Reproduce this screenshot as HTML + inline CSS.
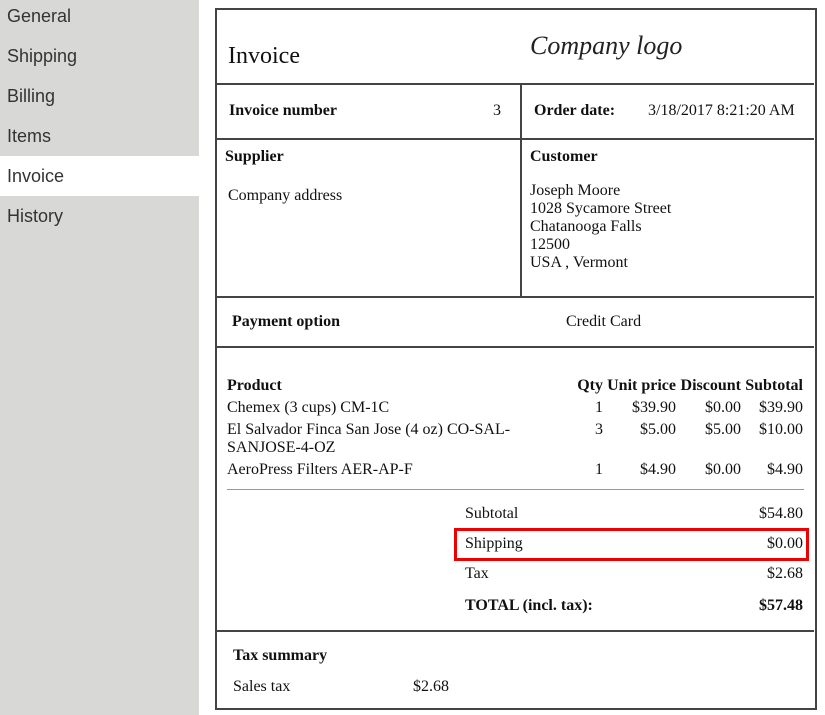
<!DOCTYPE html>
<html><head><style>
body{margin:0;width:825px;height:715px;background:#fff;position:relative;overflow:hidden;font-family:"Liberation Serif",serif;font-size:16px;color:#111}
.sb{position:absolute;left:0;top:0;width:199px;height:715px;background:#d8d9d7}
.nav{position:absolute;left:7px;font-family:"Liberation Sans",sans-serif;font-size:18px;color:#333}
.t{position:absolute;white-space:nowrap;line-height:18px}
.r{text-align:right}
.b{font-weight:bold}
.h{position:absolute;height:1px;background:#444}
</style></head><body>
<div class="sb"></div>
<div style="position:absolute;left:0;top:156px;width:199px;height:40px;background:#fff"></div>
<div class="nav" style="top:6px">General</div>
<div class="nav" style="top:46px">Shipping</div>
<div class="nav" style="top:86px">Billing</div>
<div class="nav" style="top:126px">Items</div>
<div class="nav" style="top:166px">Invoice</div>
<div class="nav" style="top:206px">History</div>

<div style="position:absolute;left:215px;top:8px;width:598px;height:698px;border:2px solid #444"></div>
<div class="h" style="left:216px;top:83px;width:598px;height:2px"></div>
<div class="h" style="left:216px;top:138px;width:598px;height:2px"></div>
<div class="h" style="left:216px;top:296px;width:598px;height:2px"></div>
<div class="h" style="left:216px;top:346px;width:598px;height:2px"></div>
<div class="h" style="left:216px;top:630px;width:598px;height:2px"></div>
<div style="position:absolute;left:520px;top:84px;width:2px;height:213px;background:#444"></div>
<div style="position:absolute;left:227px;top:489px;width:577px;height:1px;background:#999"></div>
<div style="position:absolute;left:454px;top:528px;width:349px;height:27px;border:3px solid #e00"></div>

<div class="t" style="left:228px;top:42px;font-size:24px;line-height:28px">Invoice</div>
<div class="t" style="left:530px;top:30px;font-size:26px;line-height:32px;font-style:italic;color:#222">Company logo</div>
<div class="t b" style="left:229px;top:102px">Invoice number</div>
<div class="t" style="left:493px;top:102px">3</div>
<div class="t b" style="left:534px;top:102px">Order date:</div>
<div class="t" style="left:648px;top:102px">3/18/2017 8:21:20 AM</div>
<div class="t b" style="left:225px;top:148px">Supplier</div>
<div class="t" style="left:228px;top:187px">Company address</div>
<div class="t b" style="left:530px;top:148px">Customer</div>
<div class="t" style="left:530px;top:182px">Joseph Moore<br>1028 Sycamore Street<br>Chatanooga Falls<br>12500<br>USA , Vermont</div>
<div class="t b" style="left:232px;top:313px">Payment option</div>
<div class="t" style="left:566px;top:313px">Credit Card</div>

<div class="t b" style="left:227px;top:377px">Product</div>
<div class="t b r" style="right:222px;top:377px">Qty</div>
<div class="t b r" style="right:149px;top:377px">Unit price</div>
<div class="t b r" style="right:84px;top:377px">Discount</div>
<div class="t b r" style="right:22px;top:377px">Subtotal</div>

<div class="t" style="left:227px;top:399px">Chemex (3 cups) CM-1C</div>
<div class="t r" style="right:222px;top:399px">1</div>
<div class="t r" style="right:149px;top:399px">$39.90</div>
<div class="t r" style="right:84px;top:399px">$0.00</div>
<div class="t r" style="right:22px;top:399px">$39.90</div>

<div class="t" style="left:227px;top:421px">El Salvador Finca San Jose (4 oz) CO-SAL-<br>SANJOSE-4-OZ</div>
<div class="t r" style="right:222px;top:421px">3</div>
<div class="t r" style="right:149px;top:421px">$5.00</div>
<div class="t r" style="right:84px;top:421px">$5.00</div>
<div class="t r" style="right:22px;top:421px">$10.00</div>

<div class="t" style="left:227px;top:461px">AeroPress Filters AER-AP-F</div>
<div class="t r" style="right:222px;top:461px">1</div>
<div class="t r" style="right:149px;top:461px">$4.90</div>
<div class="t r" style="right:84px;top:461px">$0.00</div>
<div class="t r" style="right:22px;top:461px">$4.90</div>

<div class="t" style="left:465px;top:505px">Subtotal</div>
<div class="t r" style="right:22px;top:505px">$54.80</div>
<div class="t" style="left:465px;top:535px">Shipping</div>
<div class="t r" style="right:22px;top:535px">$0.00</div>
<div class="t" style="left:465px;top:565px">Tax</div>
<div class="t r" style="right:22px;top:565px">$2.68</div>
<div class="t b" style="left:465px;top:597px">TOTAL (incl. tax):</div>
<div class="t b r" style="right:22px;top:597px">$57.48</div>

<div class="t b" style="left:233px;top:647px">Tax summary</div>
<div class="t" style="left:233px;top:678px">Sales tax</div>
<div class="t" style="left:413px;top:678px">$2.68</div>
</body></html>
